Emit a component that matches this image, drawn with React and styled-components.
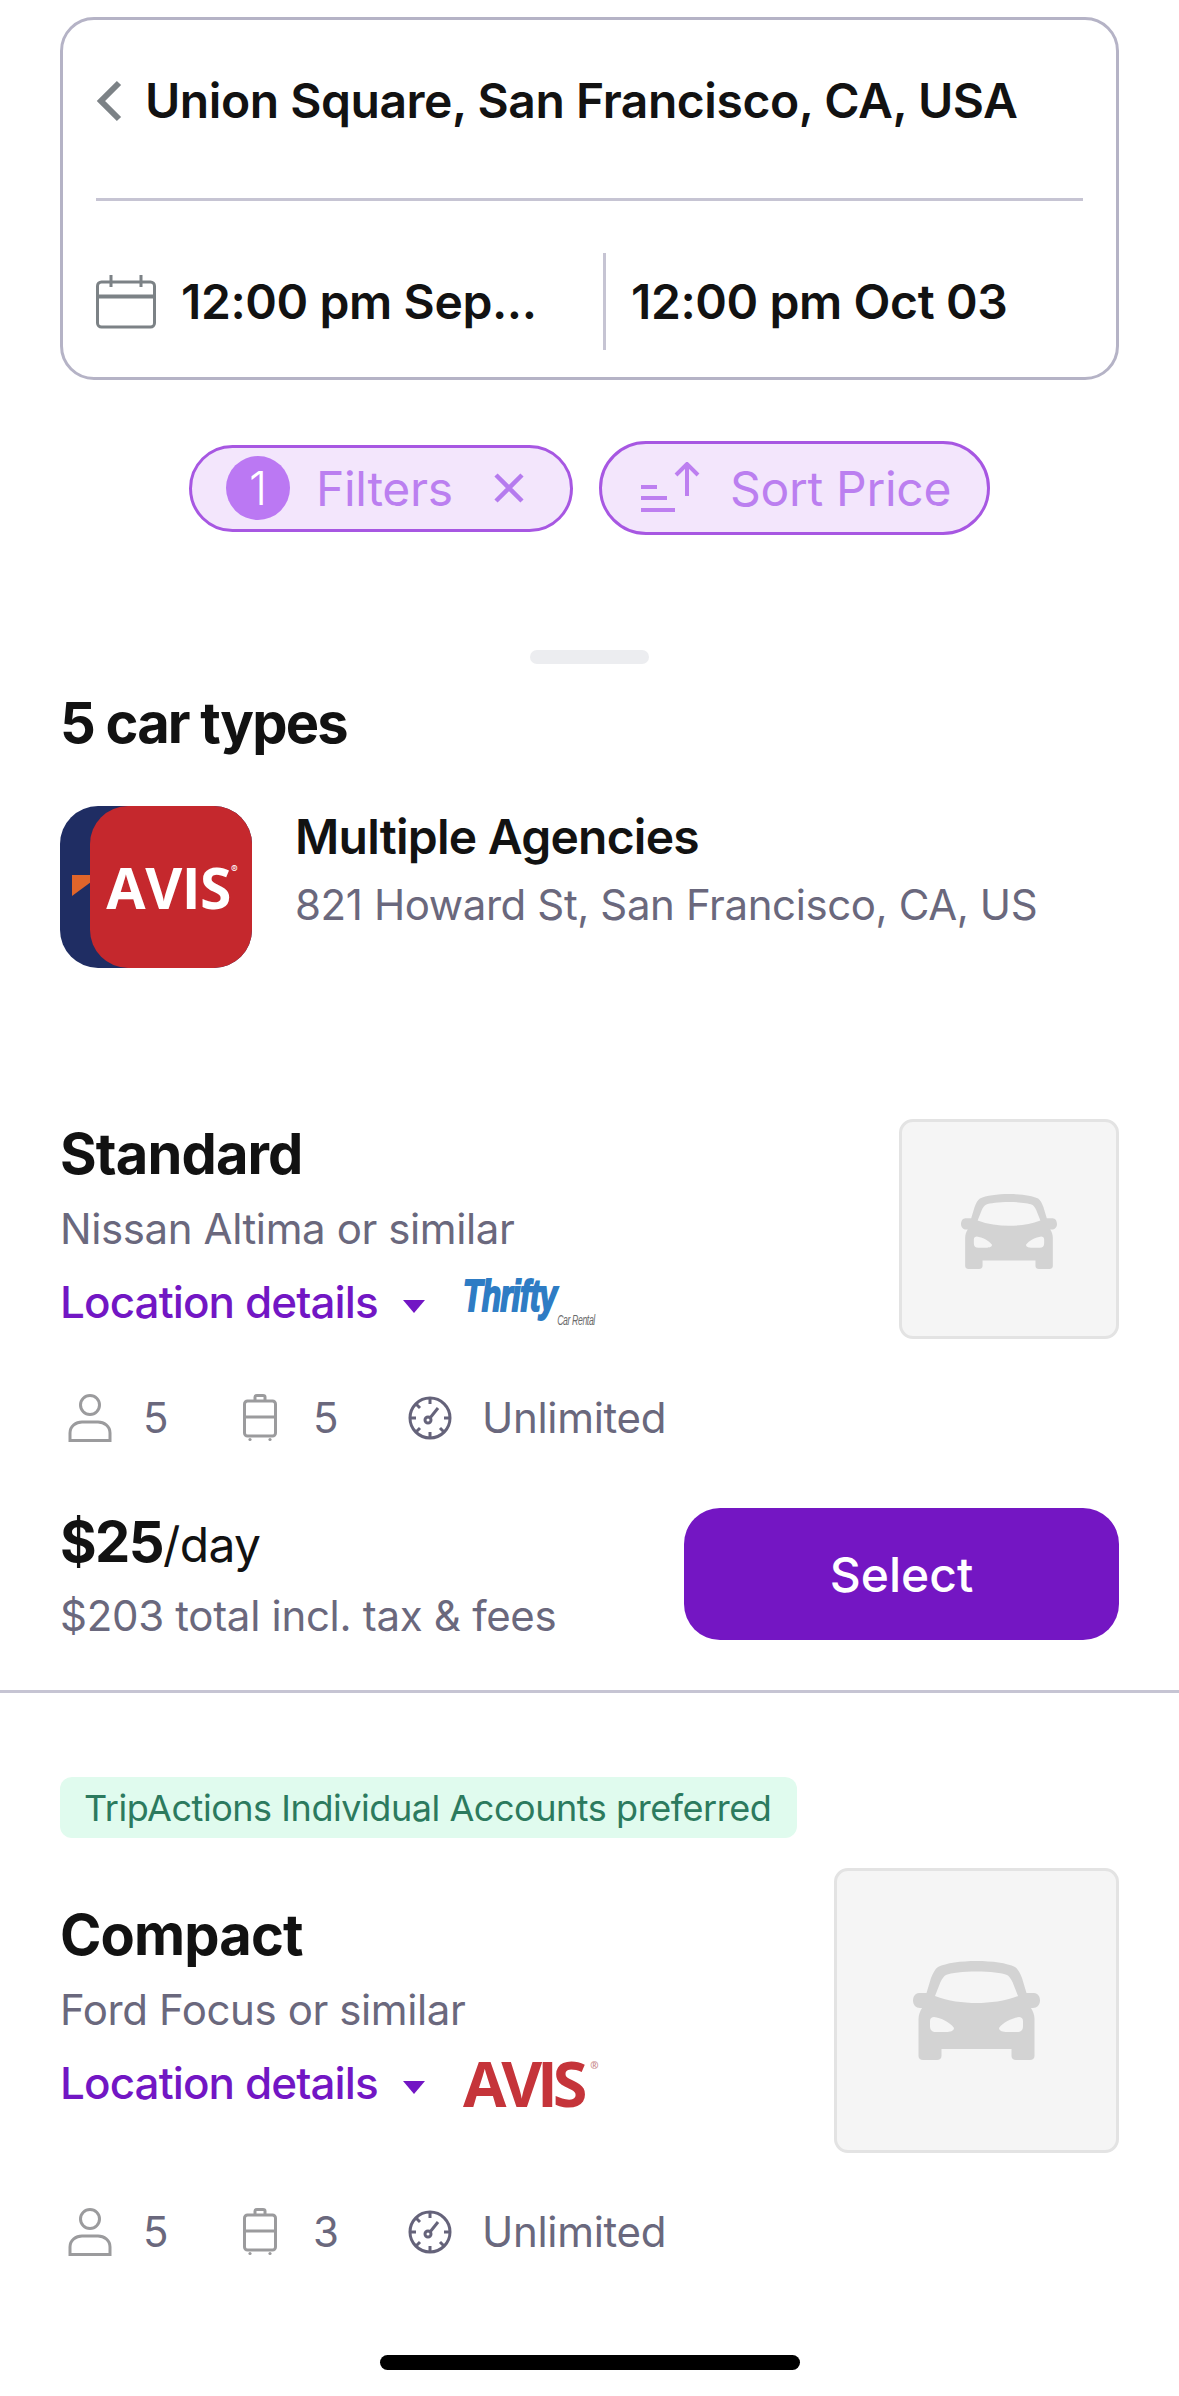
import React from "react";
import styled, { createGlobalStyle } from "styled-components";

const GlobalStyle = createGlobalStyle`
  html, body {
    margin: 0;
    padding: 0;
    background: #fff;
  }
  * {
    box-sizing: border-box;
  }
`;

const CarShape = ({ width, height }) => (
  <svg width={width} height={height} viewBox="0 0 127 99">
    <path
      fill="#d3d3d3"
      fillRule="evenodd"
      d="M63.5 0C48 0 33 2 25 6C22 8 20 12 18 17L13.5 32L6 32C2 32 0 36 0 39.5C0 44 3 47 7 47L9 47C7 50 5.5 54 5.5 58L5.5 95C5.5 97.5 7.5 99 10 99L24 99C26.5 99 28.5 97.5 28.5 95L28.5 88L98.5 88L98.5 95C98.5 97.5 100.5 99 103 99L117 99C119.5 99 121.5 97.5 121.5 95L121.5 58C121.5 54 120 50 118 47L120 47C124 47 127 44 127 39.5C127 36 125 32 121 32L113.5 32L109 17C107 12 105 8 102 6C94 2 79 0 63.5 0ZM63.5 10.5C50 10.5 38 12 33 14C31 15 29 18 27.5 21L22 35C35 40 50 42 63.5 42C77 42 92 40 105 35L99.5 21C98 18 96 15 94 14C89 12 77 10.5 63.5 10.5ZM21 56C28 57 37 61 41 67C41 70 37 71 33 71L23 71C19 71 17 69 17 65L17 60C17 57 19 56 21 56ZM106 56C99 57 90 61 86 67C86 70 90 71 94 71L104 71C108 71 110 69 110 65L110 60C110 57 108 56 106 56Z"
    />
  </svg>
);

const PersonIcon = () => (
  <svg width="44" height="48" viewBox="0 0 44 48" fill="none" stroke="#9b9b9d" strokeWidth="3">
    <circle cx="22" cy="11" r="9.5" />
    <path d="M2 46.5V39C2 32 8 28 14 28H30C36 28 42 32 42 39V46.5Z" />
  </svg>
);

const LuggageIcon = () => (
  <svg width="34" height="48" viewBox="0 0 34 48" fill="none" stroke="#9b9b9d" strokeWidth="3">
    <path d="M12 7V3C12 2 13 1.5 14 1.5H20C21 1.5 22 2 22 3V7" />
    <rect x="1.5" y="7" width="31" height="35" rx="3" />
    <path d="M1.5 23H32.5" />
    <circle cx="7" cy="45.5" r="1.6" fill="#9b9b9d" stroke="none" />
    <circle cx="27" cy="45.5" r="1.6" fill="#9b9b9d" stroke="none" />
  </svg>
);

const GaugeIcon = () => (
  <svg width="44" height="44" viewBox="0 0 44 44" fill="none" stroke="#65637a" strokeWidth="3">
    <circle cx="22" cy="22" r="20" />
    <path d="M22 2V8M22 36V42M2 22H8M36 22H42M8 8L12 12M8 36L12 32M36 36L32 32" />
    <circle cx="20" cy="24" r="3" />
    <path d="M22 22L30 12" />
  </svg>
);

const CalendarIcon = () => (
  <svg width="60" height="54" viewBox="0 0 60 54" fill="none" stroke="#7c8286" strokeWidth="3">
    <rect x="1.5" y="7" width="57" height="45" rx="4" />
    <path d="M1.5 21.5H58.5" strokeWidth="4" />
    <path d="M15 0V12M45 0V12" />
  </svg>
);

const Chevron = () => (
  <svg width="27" height="42" viewBox="0 0 27 42" fill="none" stroke="#7c8286" strokeWidth="6">
    <path d="M23 3L5 21L23 39" />
  </svg>
);

const CloseIcon = () => (
  <svg width="32" height="32" viewBox="0 0 32 32" fill="none" stroke="#b57bee" strokeWidth="4.5">
    <path d="M3 3L29 29M29 3L3 29" />
  </svg>
);

const SortIcon = () => (
  <svg width="61" height="52" viewBox="0 0 61 52" fill="none" stroke="#bd7ff0" strokeWidth="4">
    <path d="M1 25H17M1 36H27M1 48H35" />
    <path d="M47 34V3M36 13L47 2L58 13" />
  </svg>
);

const cars = [
  {
    name: "Standard",
    model: "Nissan Altima or similar",
    bags: 5,
    agency: "thrifty",
    box: 220,
    price: "$25",
    total: "$203 total incl. tax & fees",
  },
  {
    name: "Compact",
    model: "Ford Focus or similar",
    bags: 3,
    agency: "avis",
    box: 285,
    badge: "TripActions Individual Accounts preferred",
  },
];

const App = () => {
  return (
    <Page>
      <GlobalStyle />
      <SearchCard>
        <PlaceRow>
          <Chevron />
          <PlaceName>Union Square, San Francisco, CA, USA</PlaceName>
        </PlaceRow>
        <CardLine />
        <DateRow>
          <DateStart>
            <CalendarIcon />
            <DateText>12:00 pm Sep...</DateText>
          </DateStart>
          <DateEnd>
            <DateText>12:00 pm Oct 03</DateText>
          </DateEnd>
        </DateRow>
      </SearchCard>

      <ChipRow>
        <Chip $width={384} $height={87} $left={34} $right={45} $gap={26}>
          <ChipCount>1</ChipCount>
          <ChipLabel>Filters</ChipLabel>
          <CloseIcon />
        </Chip>
        <Chip $width={391} $height={94} $left={38} $right={20} $gap={29}>
          <SortIcon />
          <ChipLabel>Sort Price</ChipLabel>
        </Chip>
      </ChipRow>

      <Handle />
      <Heading>5 car types</Heading>

      <AgencyRow>
        <AgencyLogo>
          <LogoFlag />
          <LogoFace>
            <LogoWord>AVIS</LogoWord>
            <LogoMark>®</LogoMark>
          </LogoFace>
        </AgencyLogo>
        <AgencyInfo>
          <AgencyName>Multiple Agencies</AgencyName>
          <AgencyAddress>821 Howard St, San Francisco, CA, US</AgencyAddress>
        </AgencyInfo>
      </AgencyRow>

      {cars.map((car, i) => (
        <CarSection key={car.name} $first={i === 0}>
          {car.badge && <Badge>{car.badge}</Badge>}
          <CarTop $badge={!!car.badge}>
            <CarInfo $offset={car.badge ? 37 : 5}>
              <CarName>{car.name}</CarName>
              <CarModel>{car.model}</CarModel>
              <DetailsRow>
                <DetailsLink>Location details</DetailsLink>
                <Caret />
                {car.agency === "thrifty" ? (
                  <ThriftyLogo>
                    <ThriftyWord>Thrifty</ThriftyWord>
                    <ThriftySub>Car Rental</ThriftySub>
                  </ThriftyLogo>
                ) : (
                  <AvisLogo>
                    AVIS<AvisMark>®</AvisMark>
                  </AvisLogo>
                )}
              </DetailsRow>
            </CarInfo>
            <CarImage $size={car.box}>
              {car.box === 220 ? (
                <CarShape width={96} height={75} />
              ) : (
                <CarShape width={127} height={99} />
              )}
            </CarImage>
          </CarTop>
          <Specs>
            <Spec $gap={31}>
              <PersonIcon />
              <SpecText>5</SpecText>
            </Spec>
            <Spec $gap={36}>
              <LuggageIcon />
              <SpecText>{car.bags}</SpecText>
            </Spec>
            <Spec $gap={30}>
              <GaugeIcon />
              <SpecText>Unlimited</SpecText>
            </Spec>
          </Specs>
          {car.price && (
            <PriceRow>
              <PriceInfo>
                <PriceLine>
                  <Price>{car.price}</Price>
                  <PerDay>/day</PerDay>
                </PriceLine>
                <PriceTotal>{car.total}</PriceTotal>
              </PriceInfo>
              <SelectButton>Select</SelectButton>
            </PriceRow>
          )}
        </CarSection>
      ))}

      <HomeBar />
    </Page>
  );
};

export default App;

const Page = styled.div`
  position: relative;
  width: 1179px;
  height: 2396px;
  overflow: hidden;
  padding-top: 17px;
  background: #fff;
  font-family: Inter, "Liberation Sans", sans-serif;
  color: #121212;
`;
const SearchCard = styled.div`
  margin: 0 60px;
  height: 363px;
  border: 3px solid #b5b3c6;
  border-radius: 34px;
  padding: 0 33px;
`;
const PlaceRow = styled.div`
  display: flex;
  align-items: center;
  gap: 22px;
  height: 178px;
  padding-bottom: 17px;
`;
const PlaceName = styled.div`
  font-size: 48px;
  font-weight: 600;
  letter-spacing: -0.45px;
  white-space: nowrap;
`;
const CardLine = styled.div`
  height: 3px;
  background: #c6c4d3;
`;
const DateRow = styled.div`
  display: flex;
  align-items: center;
  height: 97px;
  margin-top: 52px;
`;
const DateStart = styled.div`
  display: flex;
  align-items: center;
  gap: 25px;
  width: 507px;
  height: 100%;
`;
const DateEnd = styled.div`
  display: flex;
  align-items: center;
  height: 100%;
  padding-left: 25px;
  border-left: 3px solid #c6c4d3;
`;
const DateText = styled.div`
  font-size: 48px;
  font-weight: 600;
  letter-spacing: -0.4px;
  white-space: nowrap;
`;
const ChipRow = styled.div`
  display: flex;
  justify-content: center;
  align-items: center;
  gap: 26px;
  height: 94px;
  margin-top: 61px;
`;
const Chip = styled.div`
  display: flex;
  align-items: center;
  gap: ${(p) => p.$gap}px;
  width: ${(p) => p.$width}px;
  height: ${(p) => p.$height}px;
  padding: 0 ${(p) => p.$right}px 0 ${(p) => p.$left}px;
  border: 3px solid #a757e2;
  border-radius: 48px;
  background: #f3e6fc;
`;
const ChipCount = styled.div`
  display: flex;
  align-items: center;
  justify-content: center;
  flex: none;
  width: 64px;
  height: 64px;
  border-radius: 50%;
  background: #bb78f3;
  color: #fff;
  font-size: 46px;
  font-weight: 300;
`;
const ChipLabel = styled.div`
  flex: 1;
  font-size: 48px;
  color: #bb7ff0;
  letter-spacing: -0.3px;
  white-space: nowrap;
`;
const Handle = styled.div`
  width: 119px;
  height: 14px;
  margin: 115px auto 0;
  border-radius: 7px;
  background: #ecedf0;
`;
const Heading = styled.div`
  height: 60px;
  margin: 29px 60px 0;
  font-size: 56px;
  line-height: 60px;
  font-weight: 700;
  letter-spacing: -1.8px;
`;
const AgencyRow = styled.div`
  display: flex;
  align-items: center;
  gap: 43px;
  margin: 53px 60px 0;
`;
const AgencyLogo = styled.div`
  position: relative;
  flex: none;
  width: 192px;
  height: 162px;
  border-radius: 38px;
  background: #1f2d63;
`;
const LogoFlag = styled.div`
  position: absolute;
  left: 12px;
  top: 69px;
  width: 20px;
  height: 21px;
  background: #e0652a;
  clip-path: polygon(0 0, 100% 0, 100% 30%, 0 100%);
`;
const LogoFace = styled.div`
  position: absolute;
  top: 0;
  right: 0;
  width: 162px;
  height: 162px;
  display: flex;
  align-items: center;
  justify-content: center;
  border-radius: 38px;
  background: #c5282d;
  color: #fff;
  padding-left: 2px;
`;
const LogoWord = styled.div`
  font-family: "Open Sans", "Liberation Sans", sans-serif;
  font-size: 57px;
  line-height: 1;
  font-weight: 700;
  letter-spacing: -0.5px;
`;
const LogoMark = styled.div`
  align-self: flex-start;
  margin-top: 58px;
  font-size: 10px;
  line-height: 1;
`;
const AgencyInfo = styled.div`
  display: flex;
  flex-direction: column;
  gap: 18px;
  padding-bottom: 33px;
`;
const AgencyName = styled.div`
  font-size: 48px;
  line-height: 50px;
  font-weight: 600;
  letter-spacing: -0.75px;
`;
const AgencyAddress = styled.div`
  font-size: 42px;
  line-height: 50px;
  color: #6a687d;
  letter-spacing: -0.4px;
  white-space: nowrap;
`;
const CarSection = styled.div`
  padding: ${(p) => (p.$first ? "0 60px 49px" : "84px 60px 0")};
  margin-top: ${(p) => (p.$first ? "151px" : "0")};
  border-bottom: ${(p) => (p.$first ? "3px solid #c6c4d3" : "none")};
`;
const Badge = styled.div`
  display: flex;
  align-items: center;
  width: 737px;
  height: 61px;
  padding-left: 24px;
  border-radius: 12px;
  background: #e0fbee;
  color: #2c7a5e;
  font-size: 36px;
  letter-spacing: -0.45px;
  white-space: nowrap;
`;
const CarTop = styled.div`
  display: flex;
  justify-content: space-between;
  align-items: flex-start;
  margin-top: ${(p) => (p.$badge ? "30px" : "0")};
`;
const CarInfo = styled.div`
  display: flex;
  flex-direction: column;
  padding-top: ${(p) => p.$offset}px;
`;
const CarName = styled.div`
  height: 60px;
  font-size: 56px;
  line-height: 60px;
  font-weight: 700;
  letter-spacing: -0.85px;
`;
const CarModel = styled.div`
  height: 50px;
  margin-top: 20px;
  font-size: 42px;
  line-height: 50px;
  color: #6a687d;
  letter-spacing: -0.4px;
`;
const DetailsRow = styled.div`
  display: flex;
  align-items: center;
  height: 50px;
  margin-top: 23px;
`;
const DetailsLink = styled.div`
  width: 343px;
  font-size: 44px;
  line-height: 50px;
  font-weight: 500;
  color: #7216c4;
  letter-spacing: -0.9px;
  white-space: nowrap;
`;
const Caret = styled.div`
  flex: none;
  width: 0;
  height: 0;
  margin-top: 8px;
  border-left: 11px solid transparent;
  border-right: 11px solid transparent;
  border-top: 13px solid #7216c4;
`;
const ThriftyLogo = styled.div`
  position: relative;
  width: 135px;
  height: 72px;
  margin-left: 38px;
`;
const ThriftyWord = styled.div`
  position: absolute;
  left: 0;
  top: 13px;
  font-family: "Liberation Sans", sans-serif;
  font-size: 44px;
  line-height: 34px;
  font-weight: 700;
  font-style: italic;
  letter-spacing: -1px;
  color: #2e7cc4;
  -webkit-text-stroke: 2px #2e7cc4;
  transform: scaleX(0.72);
  transform-origin: left center;
`;
const ThriftySub = styled.div`
  position: absolute;
  right: 3px;
  bottom: 11px;
  font-family: "Liberation Sans", sans-serif;
  font-size: 14px;
  line-height: 14px;
  font-style: italic;
  letter-spacing: -0.6px;
  color: #6b6b6b;
  transform: scaleX(0.62);
  transform-origin: right center;
`;
const AvisLogo = styled.div`
  display: flex;
  margin-left: 38px;
  font-family: "Open Sans", "Liberation Sans", sans-serif;
  font-size: 63px;
  line-height: 56px;
  font-weight: 700;
  letter-spacing: -5.2px;
  color: #c5343a;
`;
const AvisMark = styled.span`
  margin-left: 8px;
  font-size: 10px;
  line-height: 20px;
  letter-spacing: 0;
  color: #c98a8c;
`;
const CarImage = styled.div`
  display: flex;
  align-items: center;
  justify-content: center;
  flex: none;
  width: ${(p) => p.$size}px;
  height: ${(p) => p.$size}px;
  padding-top: ${(p) => (p.$size === 220 ? 4 : 0)}px;
  border: 3px solid #e3e3e3;
  border-radius: 14px;
  background: #f5f5f5;
`;
const Specs = styled.div`
  display: grid;
  grid-template-columns: 175px 165px auto;
  align-items: center;
  height: 50px;
  margin: 53px 0 0 8px;
`;
const Spec = styled.div`
  display: flex;
  align-items: center;
  gap: ${(p) => p.$gap}px;
`;
const SpecText = styled.div`
  font-size: 42px;
  color: #6a687d;
  letter-spacing: -0.3px;
`;
const PriceRow = styled.div`
  display: flex;
  justify-content: space-between;
  margin-top: 66px;
`;
const PriceInfo = styled.div`
  display: flex;
  flex-direction: column;
  padding-top: 4px;
`;
const PriceLine = styled.div`
  display: flex;
  align-items: baseline;
  height: 60px;
  line-height: 60px;
`;
const Price = styled.span`
  font-size: 56px;
  font-weight: 700;
  letter-spacing: -1.6px;
`;
const PerDay = styled.span`
  font-size: 48px;
  letter-spacing: -0.6px;
`;
const PriceTotal = styled.div`
  height: 50px;
  margin-top: 19px;
  font-size: 42px;
  line-height: 50px;
  color: #6a687d;
  letter-spacing: -0.3px;
`;
const SelectButton = styled.div`
  display: flex;
  align-items: center;
  justify-content: center;
  width: 435px;
  height: 132px;
  border-radius: 36px;
  background: #7416c3;
  color: #fff;
  font-size: 48px;
  font-weight: 500;
`;
const HomeBar = styled.div`
  position: absolute;
  left: 380px;
  bottom: 26px;
  width: 420px;
  height: 15px;
  border-radius: 8px;
  background: #000;
`;
